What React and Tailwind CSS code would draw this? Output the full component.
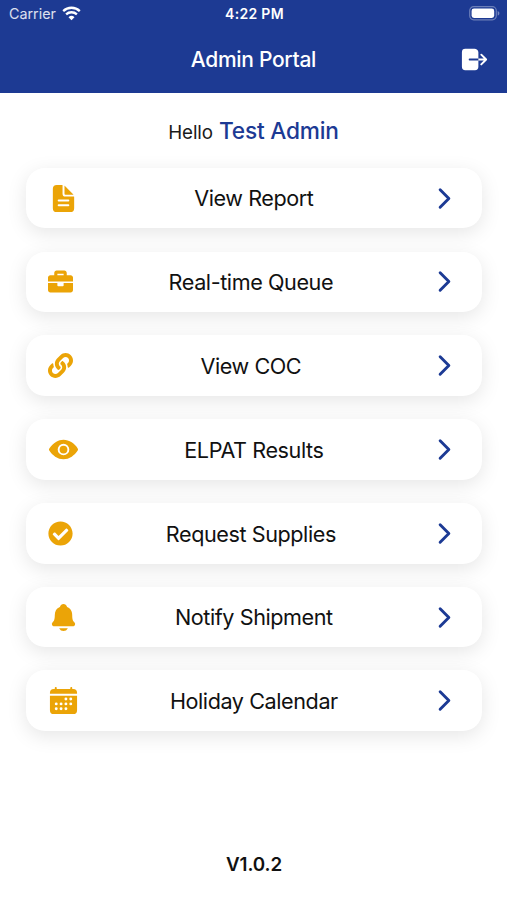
import { FaBriefcase, FaCheckCircle, FaLink } from 'react-icons/fa';
import {
    IoCalendar,
    IoChevronForward,
    IoDocumentText,
    IoEye,
    IoLogOut,
    IoNotifications,
} from 'react-icons/io5';

const menuItems = [
    { label: 'View Report', icon: IoDocumentText, size: 31 },
    { label: 'Real-time Queue', icon: FaBriefcase, size: 25 },
    { label: 'View COC', icon: FaLink, size: 25 },
    { label: 'ELPAT Results', icon: IoEye, size: 31 },
    { label: 'Request Supplies', icon: FaCheckCircle, size: 25 },
    { label: 'Notify Shipment', icon: IoNotifications, size: 31 },
    { label: 'Holiday Calendar', icon: IoCalendar, size: 31 },
];

function WifiIcon() {
    return (
        <svg width="19" height="15" viewBox="0 0 19 15" fill="none" stroke="currentColor" strokeWidth="2.3">
            <path d="M1.2 5.1a12 12 0 0 1 16.6 0" />
            <path d="M4.1 8.4a7.8 7.8 0 0 1 10.8 0" />
            <path d="M9.5 14.2 6.5 11.2a4.3 4.3 0 0 1 6 0z" fill="currentColor" stroke="none" />
        </svg>
    );
}

function BatteryIcon() {
    return (
        <svg width="31" height="15" viewBox="0 0 31 15" fill="none">
            <rect x="0.7" y="0.7" width="26.6" height="13.1" rx="4" stroke="#fff" strokeOpacity="0.35" strokeWidth="1.2" />
            <rect x="2.6" y="2.6" width="22.6" height="9.3" rx="2.4" fill="#fff" />
            <path d="M28.7 5v4.6c1.1-.4 1.7-1.3 1.7-2.3s-.6-1.900-1.700-2.300z" fill="#fff" fillOpacity="0.4" />
        </svg>
    );
}

function StatusBar() {
    return (
        <div className="grid h-[27px] grid-cols-3 items-center pl-[9px] pr-[7px]">
            <div className="flex items-center gap-[6px]">
                <span className="text-[14.3px] text-white/85">Carrier</span>
                <WifiIcon />
            </div>
            <span className="text-center text-[14px] font-semibold tracking-[0.3px]">4:22 PM</span>
            <div className="flex justify-end">
                <BatteryIcon />
            </div>
        </div>
    );
}

function MenuCard({ item }) {
    const Icon = item.icon;

    return (
        <button
            type="button"
            className="flex h-[60.6px] w-full items-center justify-between rounded-[19px] bg-white px-[22px] shadow-[0_5px_20px_rgba(0,0,0,0.10)]"
        >
            <Icon size={item.size} className="shrink-0 text-[#eba407]" />
            <span className="pt-px text-[21.6px] tracking-[-0.42px] text-[#111]">{item.label}</span>
            <IoChevronForward size={31} className="shrink-0 text-[#1c3a94]" />
        </button>
    );
}

export default function App() {
    return (
        <div className="flex h-[900px] w-full flex-col bg-white font-['Inter',sans-serif]">
            <header className="h-[92.5px] bg-[#1d3a93] text-white">
                <StatusBar />
                <div className="grid h-[65px] grid-cols-[1fr_auto_1fr] items-center px-[17px]">
                    <h1 className="col-start-2 text-[21px] font-medium tracking-[-0.3px]">Admin Portal</h1>
                    <button type="button" className="justify-self-end">
                        <IoLogOut size={31} />
                    </button>
                </div>
            </header>

            <p className="flex h-[75.3px] items-baseline justify-center gap-[6px] pt-[21px]">
                <span className="text-[18.8px] tracking-[-0.1px] text-[#1a1a1a]">Hello</span>
                <span className="text-[22.7px] font-medium tracking-[-0.2px] text-[#1c3a94]">Test Admin</span>
            </p>

            <main className="flex flex-col gap-[23.2px] pl-[26px] pr-[25.3px]">
                {menuItems.map((item) => (
                    <MenuCard key={item.label} item={item} />
                ))}
            </main>

            <footer className="mt-auto pb-[21px] pl-px text-center text-[18.8px] font-semibold tracking-[-0.1px] text-[#111]">
                V1.0.2
            </footer>
        </div>
    );
}
